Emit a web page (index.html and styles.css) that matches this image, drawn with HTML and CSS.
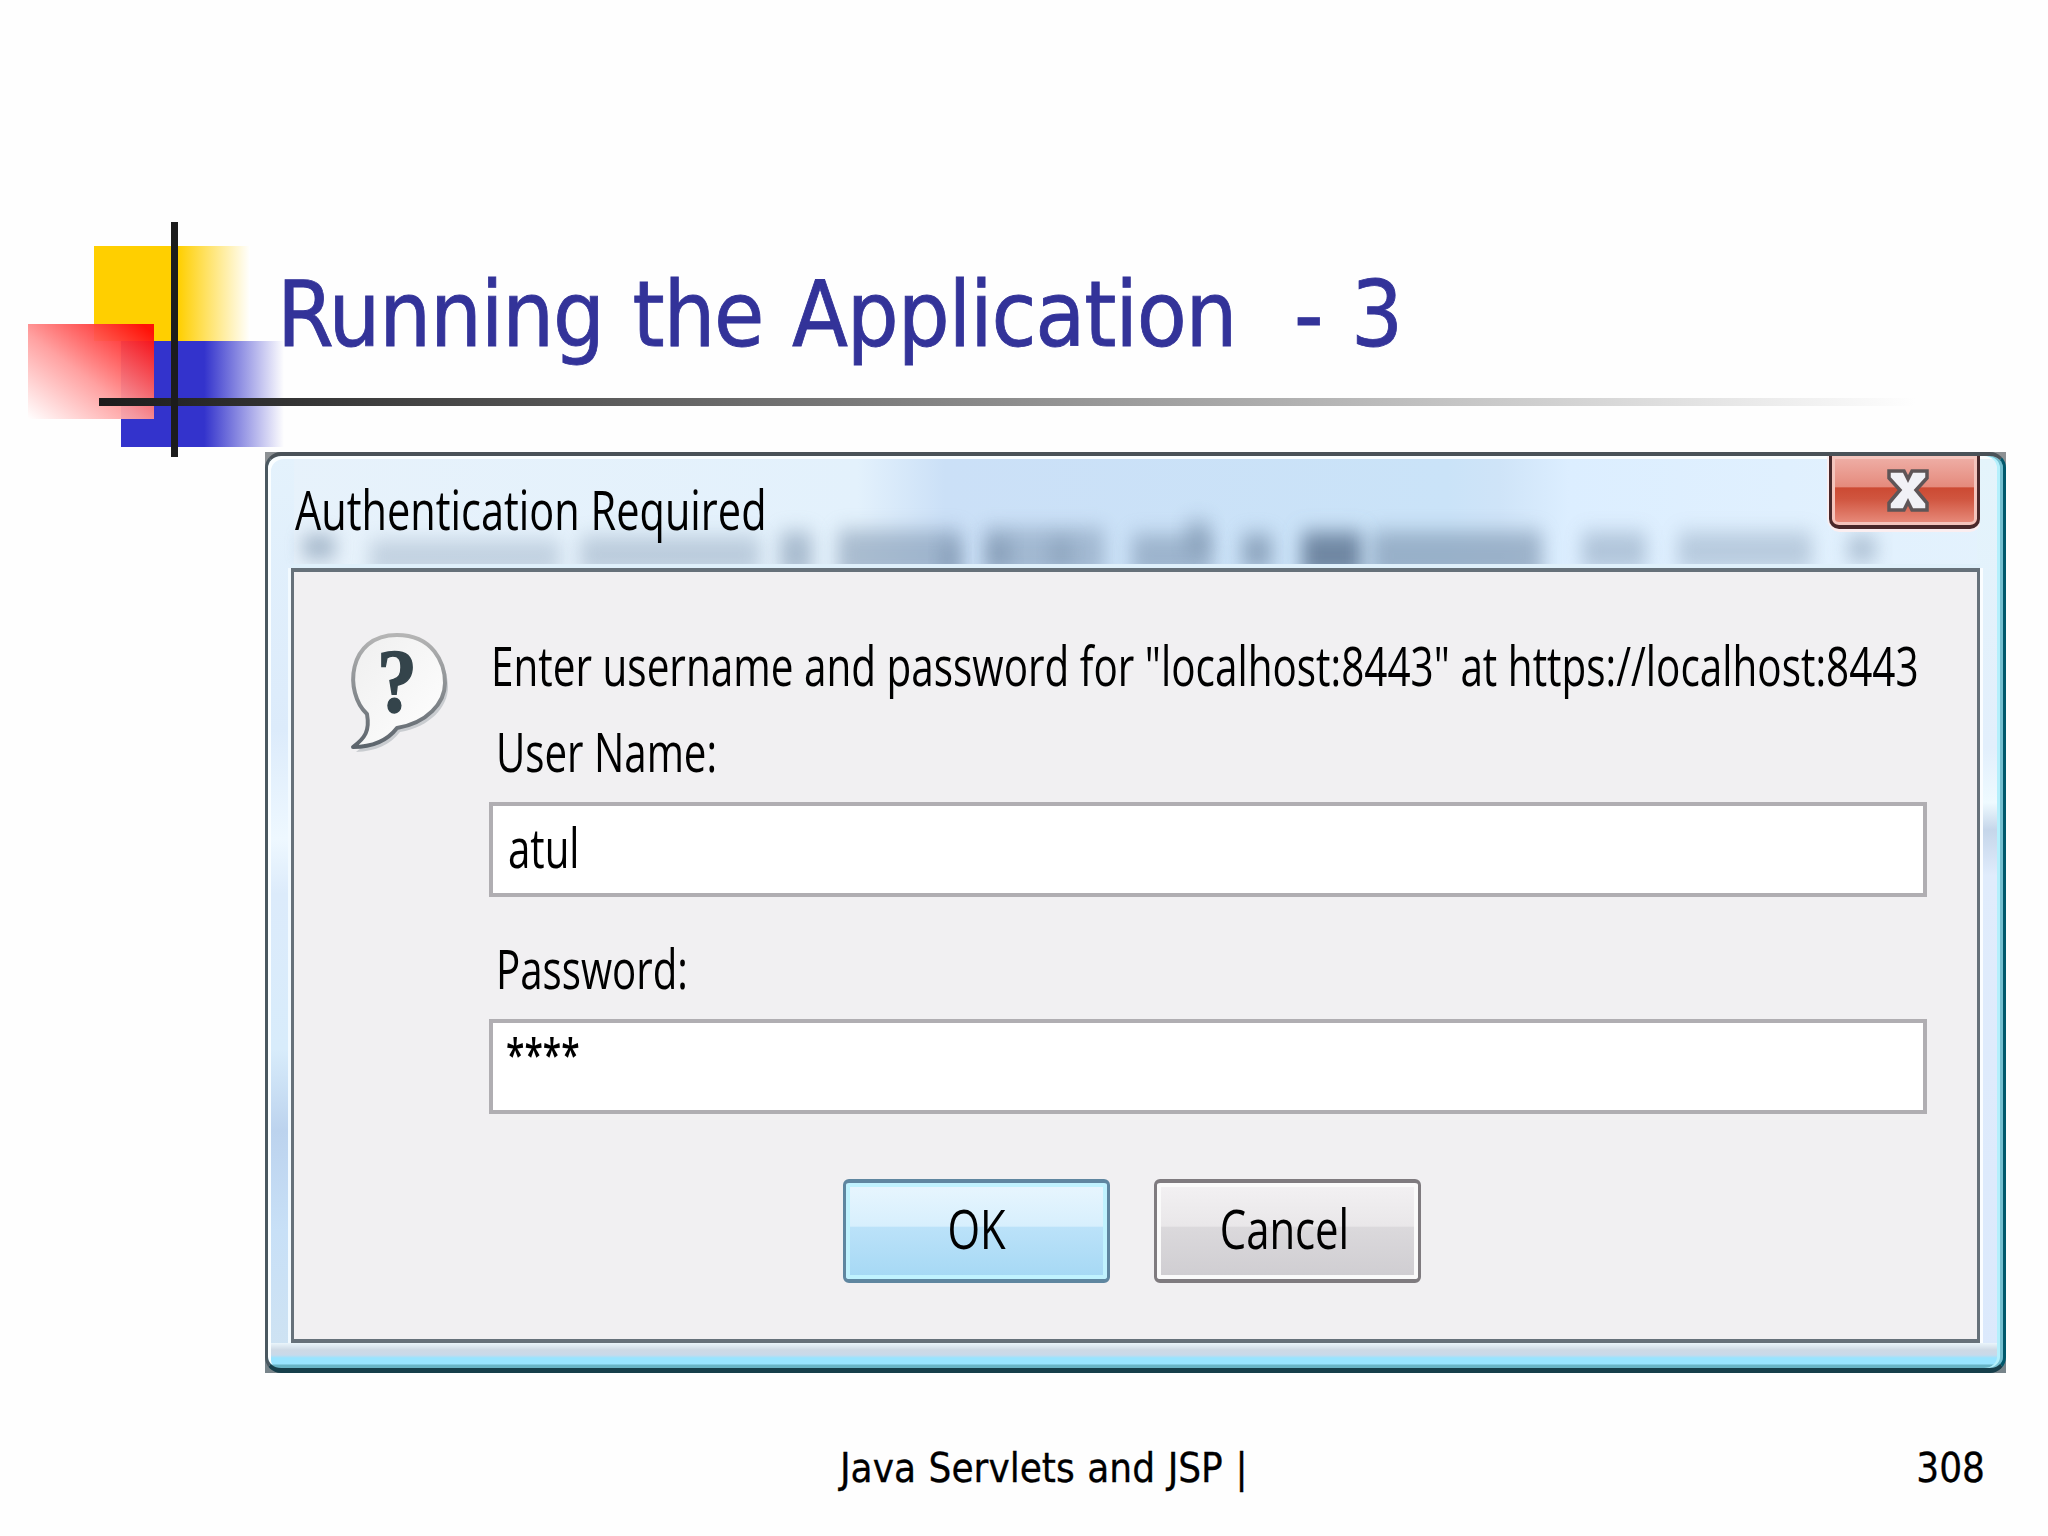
FILE: index.html
```html
<!DOCTYPE html>
<html lang="en">
<head>
    <meta charset="UTF-8">
    <meta name="viewport" content="width=device-width, initial-scale=1.0">
    <title>Running the Application - 3</title>
    <link rel="stylesheet" href="styles.css">
</head>
<body>
<div class="slide">
    <div class="slide-header">
        <div class="deco deco-yellow"></div>
        <div class="deco deco-blue"></div>
        <div class="deco deco-red"></div>
        <div class="deco deco-hline"></div>
        <div class="deco deco-vline"></div>
        <h1>Running the Application&nbsp; - 3</h1>
    </div>

    <div class="dialog">
        <div class="frame">
            <div class="titlebar">
                <!-- blurred window content behind the glass -->
                <svg class="glass" viewBox="268 456 1735 108" preserveAspectRatio="none">
                    <defs>
                        <filter id="soft" x="-60%" y="-100%" width="220%" height="300%">
                            <feGaussianBlur stdDeviation="9 10"/>
                        </filter>
                    </defs>
                    <g fill="#6f87a3">
                        <rect filter="url(#soft)" x="303" y="536" width="32" height="22" opacity=".6"/>
                        <rect filter="url(#soft)" x="370" y="540" width="190" height="34" opacity=".3"/>
                        <rect filter="url(#soft)" x="580" y="536" width="180" height="38" opacity=".35"/>
                        <rect filter="url(#soft)" x="780" y="532" width="32" height="44" opacity=".5"/>
                        <rect filter="url(#soft)" x="838" y="530" width="124" height="50" opacity=".5"/>
                        <rect filter="url(#soft)" x="940" y="542" width="20" height="36" opacity=".4"/>
                        <rect filter="url(#soft)" x="984" y="528" width="120" height="50" opacity=".45"/>
                        <rect filter="url(#soft)" x="988" y="538" width="22" height="30" opacity=".5"/>
                        <rect filter="url(#soft)" x="1050" y="538" width="22" height="30" opacity=".35"/>
                        <rect filter="url(#soft)" x="1132" y="534" width="80" height="44" opacity=".5"/>
                        <rect filter="url(#soft)" x="1186" y="520" width="24" height="34" opacity=".45"/>
                        <rect filter="url(#soft)" x="1242" y="534" width="30" height="36" opacity=".65"/>
                        <rect filter="url(#soft)" x="1302" y="532" width="60" height="46" opacity="1"/>
                        <rect filter="url(#soft)" x="1372" y="531" width="170" height="50" opacity=".55"/>
                        <rect filter="url(#soft)" x="1582" y="532" width="64" height="38" opacity=".4"/>
                        <rect filter="url(#soft)" x="1678" y="532" width="134" height="38" opacity=".35"/>
                        <rect filter="url(#soft)" x="1848" y="536" width="28" height="26" opacity=".45"/>
                    </g>
                </svg>
                <span class="title-text">Authentication Required</span>
                <div class="btn-close">
                    <svg viewBox="1884 467 44 46">
                        <path d="M1888 471H1903L1907 479L1911 471H1926V478L1915 490L1926 503V510H1911L1907 502L1903 510H1888V503L1899 490L1888 478Z"/>
                    </svg>
                </div>
            </div>
            <div class="panel">
                <svg class="icon-ask" viewBox="348 628 106 126">
                    <defs>
                        <linearGradient id="edge" x1="0" y1="0" x2="0" y2="1">
                            <stop offset="0" stop-color="#b5b5b5"/>
                            <stop offset="1" stop-color="#5c646c"/>
                        </linearGradient>
                        <linearGradient id="fill" x1="0" y1="0" x2="1" y2="1">
                            <stop offset="0" stop-color="#efefef"/>
                            <stop offset="1" stop-color="#ffffff"/>
                        </linearGradient>
                    </defs>
                    <path class="shade" d="M368 713C345 692 348 634 398 634C434 634 446 662 446 682C446 702 428 722 398 727C388 740 374 746 354 747C366 738 371 730 368 713Z"/>
                    <path d="M368 713C345 692 348 634 398 634C434 634 446 662 446 682C446 702 428 722 398 727C388 740 374 746 354 746C366 737 371 730 368 713Z" fill="url(#fill)" stroke="url(#edge)" stroke-width="4" stroke-linejoin="round"/>
                    <text x="378" y="711" textLength="40" lengthAdjust="spacingAndGlyphs">?</text>
                </svg>
                <div class="form">
                    <div class="prompt"><span>Enter username and password for "localhost:8443" at https://localhost:8443</span></div>
                    <div class="label"><span>User Name:</span></div>
                    <div class="field"><span>atul</span></div>
                    <div class="label label-password"><span>Password:</span></div>
                    <div class="field field-password"><span>****</span></div>
                    <div class="btn-layout">
                        <div class="btn btn-ok"><span>OK</span></div>
                        <div class="btn btn-cancel"><span>Cancel</span></div>
                    </div>
                </div>
            </div>
        </div>
    </div>

    <div class="slide-footer">
        <span>Java Servlets and JSP |</span>
        <span class="page-no">308</span>
    </div>
</div>
</body>
</html>
```
FILE: styles.css
```css
*{
    box-sizing: border-box;
}
body{
    margin: 0;
    padding: 0;
    background-color: #fefefe;
}
.slide{
    width: 2048px;
    height: 1536px;
    overflow: hidden;
    font-family: "DejaVu Sans Condensed", "DejaVu Sans", sans-serif;
    color: #000;
}
.slide-header{
    position: relative;
    height: 452px;
    padding: 262px 0 0 277px;
}
h1{
    position: relative;
    margin: 0;
    font-size: 91px;
    font-weight: normal;
    line-height: 106px;
    letter-spacing: -1.2px;
    word-spacing: 4px;
    white-space: nowrap;
    color: #333399;
    -webkit-text-stroke: .8px #333399;
}
/* template squares and rules */
.deco{
    position: absolute;
}
.deco-yellow{
    left: 94px;
    top: 246px;
    width: 156px;
    height: 95px;
    background: linear-gradient(to right, #ffcf00 0, #ffcf00 54%, #fff 100%);
}
.deco-blue{
    left: 121px;
    top: 341px;
    width: 163px;
    height: 106px;
    background: linear-gradient(to right, #3333cc 0, #3333cc 51%, #fefefe 100%);
}
.deco-red{
    left: 28px;
    top: 324px;
    width: 126px;
    height: 95px;
    background: linear-gradient(to top right, #fff 0, #ff9c9c 45%, #ff0808 95%);
    opacity: .95;
}
.deco-hline{
    left: 99px;
    top: 398px;
    width: 1816px;
    height: 8px;
    background: linear-gradient(to right, #1c1c1c, #fefefe);
}
.deco-vline{
    left: 171px;
    top: 222px;
    width: 7px;
    height: 235px;
    background-color: #1c1c1c;
}

.dialog{
    width: 1741px;
    height: 921px;
    margin-left: 265px;
    background: linear-gradient(to bottom, #8d9194, #77848a);
    font-family: "Open Sans", sans-serif;
    font-size: 54px;
    line-height: 54px;
}
.dialog span{
    display: inline-block;
    white-space: nowrap;
    transform-origin: 0 50%;
    transform: scaleX(.745);
}
.frame{
    height: 921px;
    padding: 0 23px;
    border-style: solid;
    border-width: 4px 3px 5px 3px;
    border-color: #4a5258 #00586c #163f4b #4a5860;
    border-radius: 16px;
    box-shadow: inset -3px 0 0 #74bfd0, inset -6px 0 0 #b4f0fc, inset 3px 3px 0 #fafeff;
    background:
        linear-gradient(to bottom, #eaf5fb 0, #cdd9e5 7px, #c8d9ea 12px, #98e4ff 15px, #98e4ff 21px, #68b4c6 22px, #68b4c6 25px) 0 100% / 100% 25px no-repeat,
        linear-gradient(to bottom, #e4f2fc 0, #dcebfb 30%, #eef8ff 42%, #dcebfb 48%, #d8ecfb 65%, #bcd3ee 74%, #c8e0f7 85%, #cfe3f2 100%) 0 0 / 26px 100% no-repeat,
        linear-gradient(to bottom, #e4f4fb 0, #e2effc 32%, #eefaff 38%, #c5d6ea 41%, #e0ecfc 46%, #dbe9fc 100%) 100% 0 / 26px 100% no-repeat,
        linear-gradient(to right, #e7f2fb 0, #e3f1fc 34%, #cbe0f7 39%, #cae3f8 68%, #cfe4f8 71%, #dceeff 75%, #e4f2fd 100%);
}
.titlebar{
    position: relative;
    display: flex;
    justify-content: space-between;
    height: 112px;
}
.glass{
    position: absolute;
    left: -23px;
    top: 0;
    width: 1735px;
    height: 108px;
}
.titlebar .title-text{
    position: relative;
    margin: 26px 0 0 4px;
    height: 54px;
    transform: scaleX(.769);
}
.btn-close{
    position: relative;
    width: 151px;
    height: 73px;
    padding: 11px 0 0 53px;
    border: 3px solid #49282a;
    border-top: 0;
    border-bottom-width: 4px;
    border-radius: 0 0 10px 10px;
    box-shadow: inset 0 0 0 3px #f4c4bc, 0 3px 0 #fbeef0, -2px 0 0 #fbeef0;
    background: linear-gradient(to bottom, #efb0a8 0, #e58a7c 45%, #cc4a33 46%, #d0553f 62%, #e98f80 100%);
}
.btn-close svg{
    display: block;
    width: 44px;
    height: 46px;
}
.btn-close path{
    fill: #f1f1f6;
    stroke: #5e5557;
    stroke-width: 3.5;
}

.panel{
    display: flex;
    height: 775px;
    border: 4px solid #66717a;
    border-width: 4px 3px;
    background-color: #f1f0f2;
    box-shadow: 0 -4px 0 #dff0fb, 3px 0 0 #fafdff, -3px 0 0 #f2faff;
}
.icon-ask{
    flex: none;
    width: 106px;
    height: 126px;
    margin: 57px 36px 0 53px;
}
.icon-ask text{
    font-family: "Liberation Serif", serif;
    font-size: 90px;
    font-weight: bold;
    fill: #34444b;
    stroke: #34444b;
    stroke-width: 1.5;
}
.icon-ask .shade{
    fill: #c9ccd0;
    transform: translate(3px, 4px);
}
.form{
    width: 1438px;
    padding-top: 66px;
}
.prompt, .label{
    height: 54px;
}
.prompt{
    padding-left: 2px;
}
.dialog .prompt span{
    transform: scaleX(.7495);
}
.label{
    margin-top: 32px;
    padding-left: 7px;
}
.label-password{
    margin-top: 44px;
}
.field{
    height: 95px;
    margin-top: 24px;
    padding: 14px 15px;
    border: 4px solid #b0aeb2;
    background-color: #fff;
}
.dialog .field-password{
    padding: 3px 13px;
    font-size: 46px;
    font-weight: 600;
}
.dialog .field-password span{
    transform: scaleX(.73);
}
.btn-layout{
    display: flex;
    gap: 44px;
    margin-top: 65px;
    padding-left: 354px;
}
.btn{
    width: 267px;
    height: 104px;
    padding-top: 18px;
    border: 4px solid #7f7b7f;
    border-width: 4px 3px;
    border-radius: 6px;
    text-align: center;
    box-shadow: inset 0 0 0 4px #fafafa;
    background: linear-gradient(to bottom, #f3f1f3 0, #e9e7e9 45%, #dbd9dc 46%, #cfcdd1 100%);
}
.dialog .btn span{
    transform-origin: 50% 50%;
    transform: scaleX(.775);
}
.btn-cancel{
    padding-right: 6px;
}
.btn-ok{
    border-color: #5f86a0;
    box-shadow: inset 0 0 0 4px #c0f2fe;
    background: linear-gradient(to bottom, #e8f6fe 0, #d7effd 45%, #bbe2f9 46%, #a5d8f4 100%);
}

.slide-footer{
    display: flex;
    justify-content: space-between;
    margin-top: 72px;
    padding: 0 63px 0 840px;
    font-size: 40px;
    line-height: 46px;
    word-spacing: 1.2px;
    -webkit-text-stroke: .3px #000;
}
```
